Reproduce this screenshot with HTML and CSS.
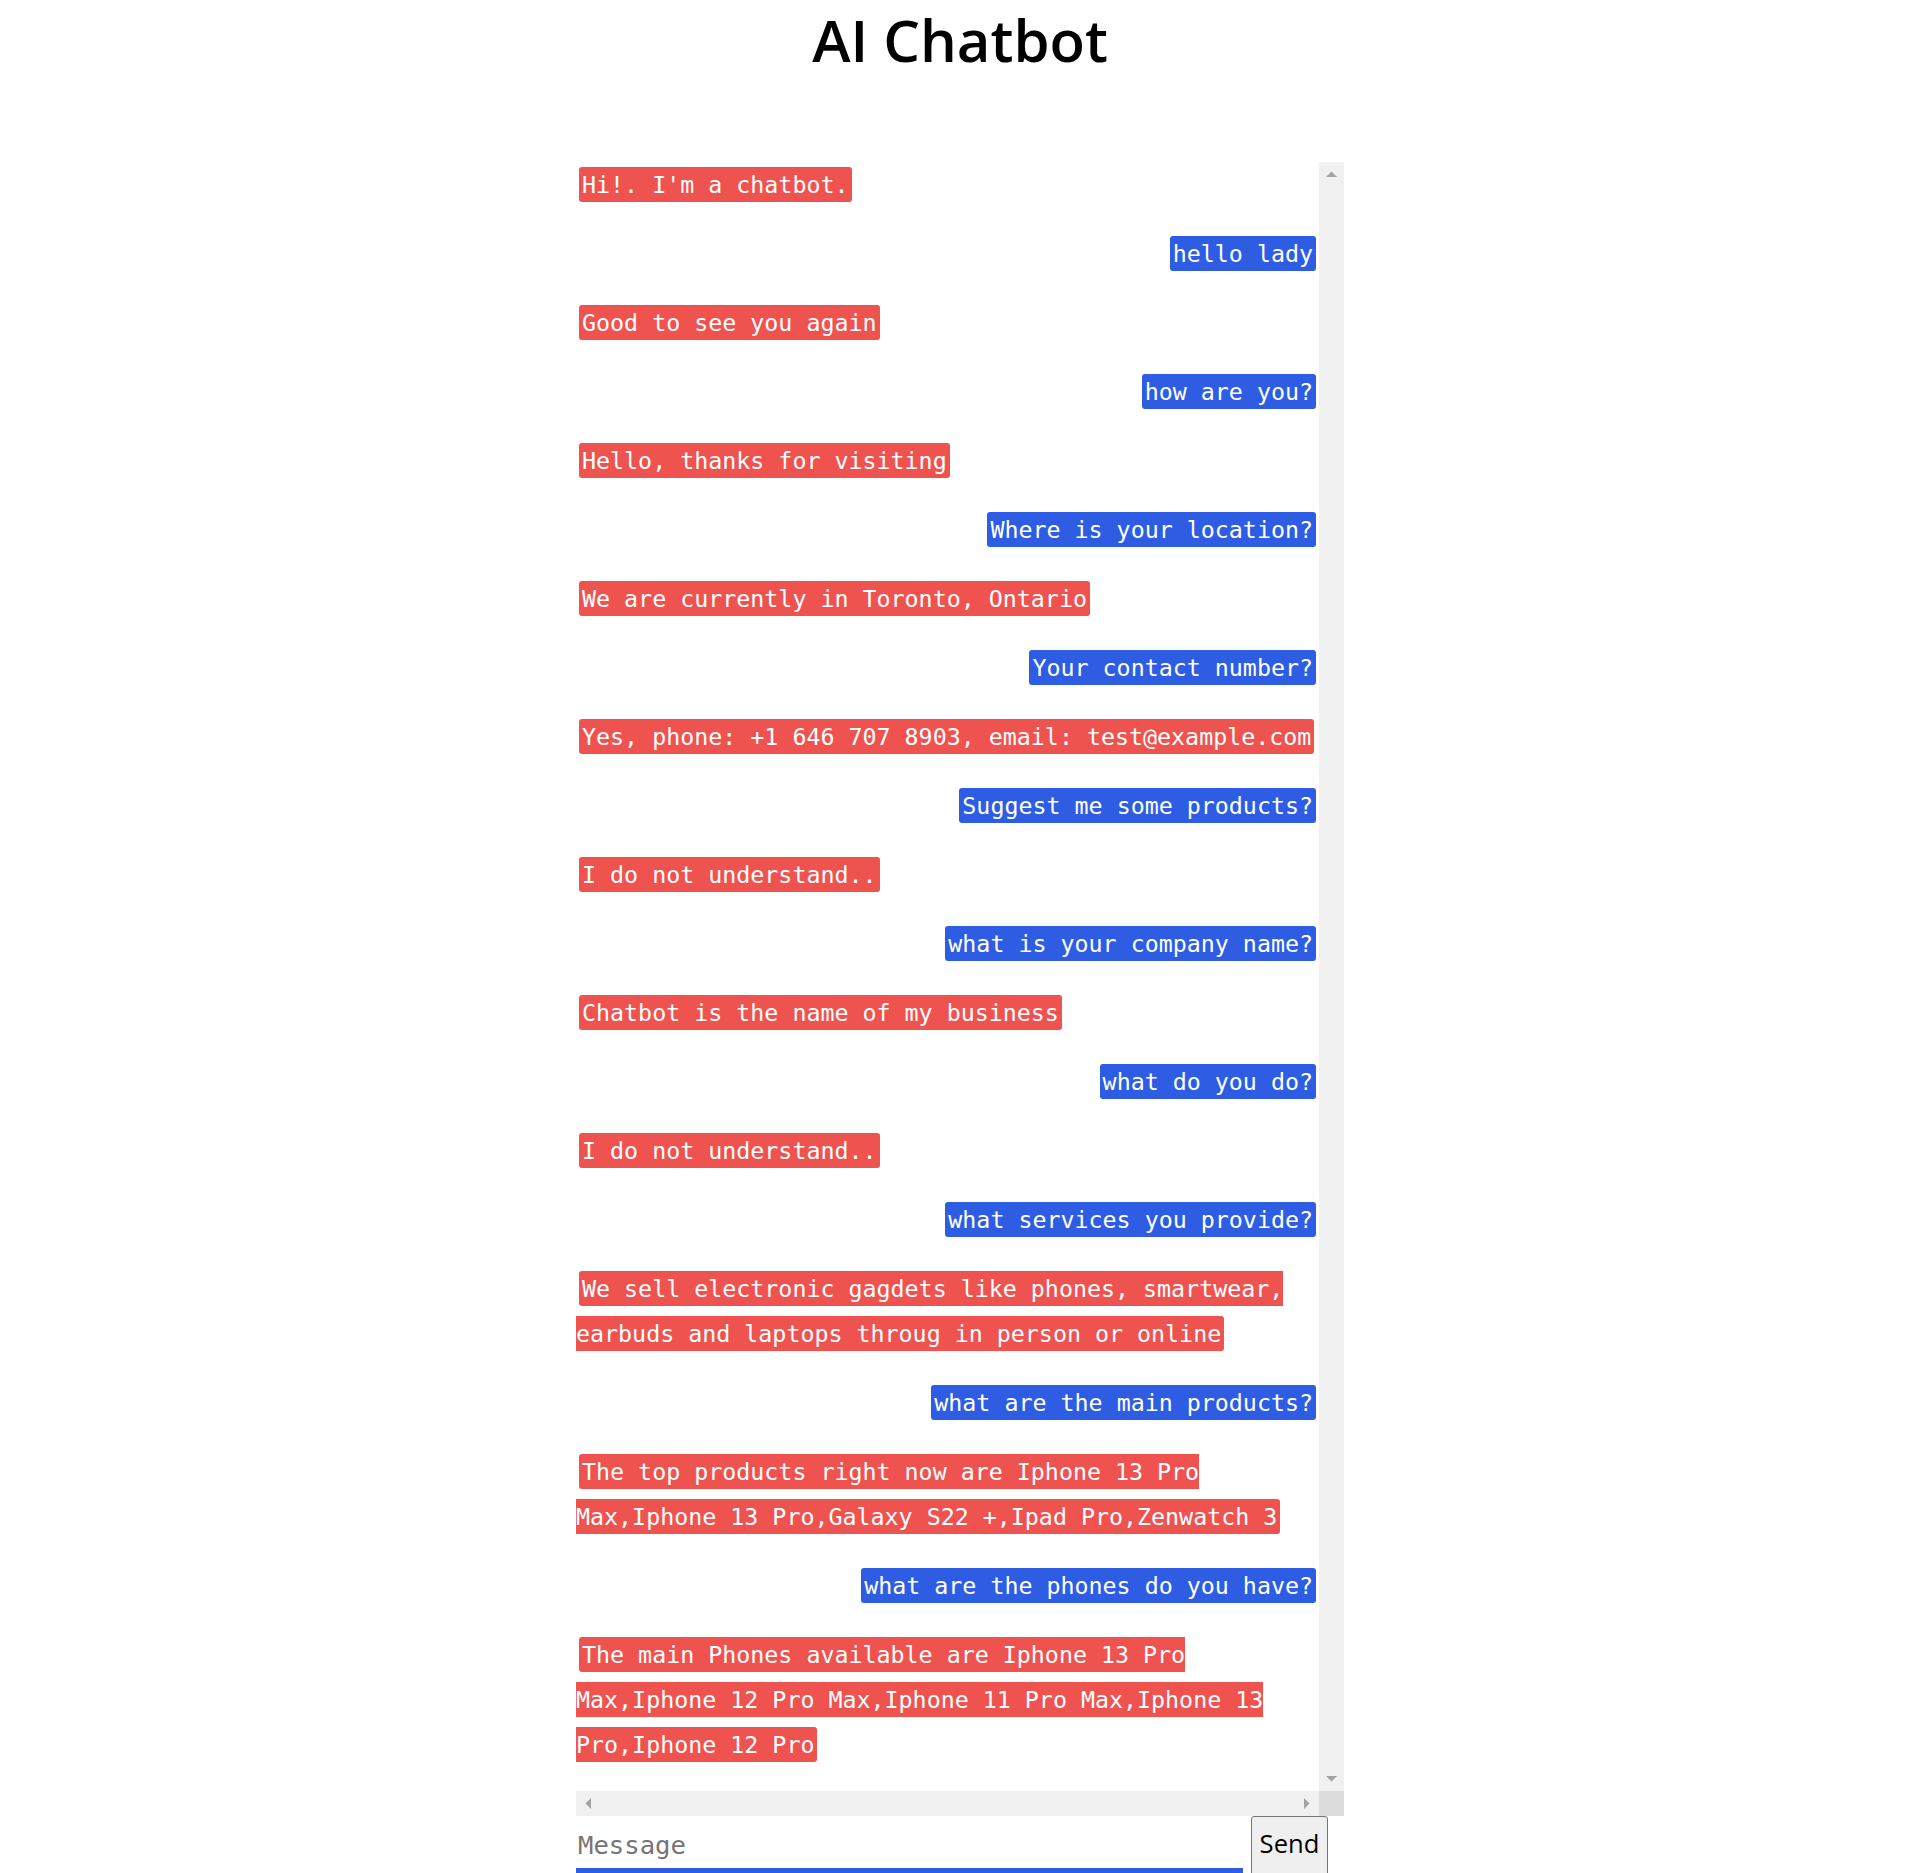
FILE: index.html
```html
<!DOCTYPE html>
<html lang="en">
<head>
<meta charset="utf-8">
<title>AI Chatbot</title>
<link rel="stylesheet" href="styles.css">
</head>
<body>
<h1 class="title">AI Chatbot</h1>
<div class="chat">
  <div class="chat-log">
    <div class="msg bot"><span class="bubble">Hi!. I'm a chatbot.</span></div>
    <div class="msg user"><span class="bubble">hello lady</span></div>
    <div class="msg bot"><span class="bubble">Good to see you again</span></div>
    <div class="msg user"><span class="bubble">how are you?</span></div>
    <div class="msg bot"><span class="bubble">Hello, thanks for visiting</span></div>
    <div class="msg user"><span class="bubble">Where is your location?</span></div>
    <div class="msg bot"><span class="bubble">We are currently in Toronto, Ontario</span></div>
    <div class="msg user"><span class="bubble">Your contact number?</span></div>
    <div class="msg bot"><span class="bubble">Yes, phone: +1 646 707 8903, email: test@example.com</span></div>
    <div class="msg user"><span class="bubble">Suggest me some products?</span></div>
    <div class="msg bot"><span class="bubble">I do not understand..</span></div>
    <div class="msg user"><span class="bubble">what is your company name?</span></div>
    <div class="msg bot"><span class="bubble">Chatbot is the name of my business</span></div>
    <div class="msg user"><span class="bubble">what do you do?</span></div>
    <div class="msg bot"><span class="bubble">I do not understand..</span></div>
    <div class="msg user"><span class="bubble">what services you provide?</span></div>
    <div class="msg bot"><span class="bubble">We sell electronic gagdets like phones, smartwear, earbuds and laptops throug in person or online</span></div>
    <div class="msg user"><span class="bubble">what are the main products?</span></div>
    <div class="msg bot"><span class="bubble">The top products right now are Iphone 13 Pro Max,Iphone 13 Pro,Galaxy S22 +,Ipad Pro,Zenwatch 3</span></div>
    <div class="msg user"><span class="bubble">what are the phones do you have?</span></div>
    <div class="msg bot"><span class="bubble">The main Phones available are Iphone 13 Pro Max,Iphone 12 Pro Max,Iphone 11 Pro Max,Iphone 13 Pro,Iphone 12 Pro</span></div>
  </div>
  <div class="vbar">
    <svg class="arrow" width="25" height="25" viewBox="0 0 25 25"><polygon points="7,15 18,15 12.5,9.5"/></svg>
    <svg class="arrow" width="25" height="25" viewBox="0 0 25 25"><polygon points="7,10 18,10 12.5,15.5"/></svg>
  </div>
  <div class="hbar">
    <svg class="arrow" width="25" height="25" viewBox="0 0 25 25"><polygon points="15,7 15,18 9.5,12.5"/></svg>
    <svg class="arrow" width="25" height="25" viewBox="0 0 25 25"><polygon points="10,7 10,18 15.5,12.5"/></svg>
  </div>
  <div class="corner"></div>
</div>
<form class="composer">
  <input class="message-input" type="text" placeholder="Message">
  <button class="send-btn" type="button">Send</button>
</form>
</body>
</html>
```
FILE: styles.css
```css
html, body {
  margin: 0;
  padding: 0;
  height: 100%;
  overflow: hidden;
  background: #ffffff;
}

.title {
  margin: 0 0 83px;
  font-family: "Open Sans", "Noto Sans", sans-serif;
  font-weight: 600;
  font-size: 58px;
  line-height: 79px;
  text-align: center;
  color: #000000;
}

.chat {
  display: grid;
  grid-template-columns: 1fr 25px;
  grid-template-rows: 1fr 25px;
  width: 768px;
  height: 1654px;
  margin: 0 auto;
}

.chat-log {
  min-width: 0;
  overflow: hidden;
  font-family: "DejaVu Sans Mono", "Liberation Mono", monospace;
  font-size: 23.3px;
}

.msg {
  line-height: 45px;
  margin-bottom: 24px;
}

.msg.user {
  text-align: right;
}

.bubble {
  color: #ffffff;
  padding: 4px 3px;
  margin: 0 3px;
  border-radius: 3px;
}

.bot .bubble {
  background: #ef5350;
}

.user .bubble {
  background: #2e5de3;
}

.vbar {
  background: #f1f1f1;
  display: flex;
  flex-direction: column;
  justify-content: space-between;
}

.hbar {
  background: #f1f1f1;
  display: flex;
  justify-content: space-between;
}

.arrow {
  display: block;
  fill: #a3a3a3;
}

.corner {
  background: #dcdcdc;
}

.composer {
  display: flex;
  align-items: flex-start;
  gap: 8px;
  width: 768px;
  margin: 0 auto;
}

.message-input {
  box-sizing: border-box;
  width: 667px;
  height: 58px;
  margin: 0;
  padding: 6px 0 0 2px;
  border: none;
  border-bottom: 6px solid #2e5de3;
  outline: none;
  font-family: "DejaVu Sans Mono", "Liberation Mono", monospace;
  font-size: 25.6px;
  color: #000000;
  background: #ffffff;
}

.message-input::placeholder {
  color: #757575;
}

.send-btn {
  box-sizing: border-box;
  width: 77px;
  height: 62px;
  margin: 0;
  padding: 0 0 8px;
  border: 1px solid #767676;
  border-radius: 3px;
  background: #efefef;
  font-family: "Open Sans", "Noto Sans", sans-serif;
  font-size: 25.6px;
  line-height: 35px;
  color: #000000;
  text-align: center;
  vertical-align: top;
}
```
